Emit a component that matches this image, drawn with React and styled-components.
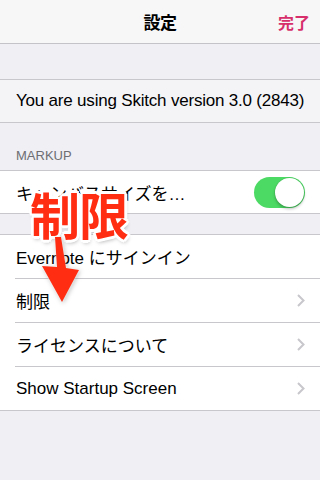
import React from 'react';
import styled, { createGlobalStyle } from 'styled-components';

const GlobalStyle = createGlobalStyle`
  html, body {
    margin: 0;
    padding: 0;
    background: #efeff4;
  }
  body {
    font-family: "Liberation Sans", "Noto Sans CJK JP", sans-serif;
    color: #000;
    -webkit-font-smoothing: antialiased;
  }
`;

const Screen = styled.div`
  position: relative;
  width: 320px;
  height: 480px;
  overflow: hidden;
  background: #efeff4;
`;

const NavBar = styled.div`
  height: 43px;
  display: grid;
  grid-template-columns: 1fr auto 1fr;
  align-items: center;
  background: #f7f7f8;
  border-bottom: 1px solid #c4c4c8;
`;

const NavTitle = styled.div`
  grid-column: 2;
  font-size: 17px;
  font-weight: 600;
  letter-spacing: -0.5px;
`;

const NavDone = styled.div`
  justify-self: end;
  padding-right: 10px;
  font-size: 16px;
  font-weight: 600;
  color: #d62f6b;
`;

const Group = styled.div`
  margin-top: ${p => p.gap}px;
  background: ${p => p.tint || '#fff'};
  border-top: 1px solid #c8c7cc;
  border-bottom: 1px solid #c8c7cc;
`;

const SectionHeader = styled.div`
  height: 47px;
  box-sizing: border-box;
  display: flex;
  align-items: flex-end;
  padding: 0 16px 7px;
  font-size: 13px;
  color: #6d6d72;
`;

const Row = styled.div`
  height: ${p => p.h || 43}px;
  display: flex;
  align-items: center;
  justify-content: space-between;
  padding: 0 15px 0 16px;
  font-size: 17px;
  white-space: nowrap;

  & + & {
    border-top: 1px solid #c8c7cc;
    margin-left: 15px;
    padding-left: 1px;
  }
`;

const Label = styled.span`
  letter-spacing: ${p => (p.tight ? '-0.2px' : '0')};
`;

const Switch = styled.div`
  width: 51px;
  height: 31px;
  border-radius: 16px;
  background: #4cd964;
  position: relative;
  flex-shrink: 0;
`;

const Knob = styled.div`
  position: absolute;
  top: 1px;
  right: 1px;
  width: 29px;
  height: 29px;
  border-radius: 50%;
  background: #fff;
  box-shadow: 0 2px 3px rgba(0, 0, 0, 0.25), 0 0 0 0.5px rgba(0, 0, 0, 0.1);
`;

const Chevron = () => (
  <svg width="8" height="13" viewBox="0 0 8 13">
    <path d="M1 1l5.5 5.5L1 12" fill="none" stroke="#c7c7cc" strokeWidth="2" />
  </svg>
);

const Callout = styled.div`
  position: absolute;
  left: 30px;
  top: 181px;
  font-family: "Noto Sans CJK JP", sans-serif;
  font-size: 50px;
  font-weight: 700;
  line-height: 64px;
  color: #ff2d12;
  letter-spacing: -1px;
  text-shadow:
    2px 0 0 #fff, -2px 0 0 #fff, 0 2px 0 #fff, 0 -2px 0 #fff,
    2px 2px 0 #fff, -2px -2px 0 #fff, 2px -2px 0 #fff, -2px 2px 0 #fff,
    3px 0 0 #fff, -3px 0 0 #fff, 0 3px 0 #fff, 0 -3px 0 #fff,
    1px 3px 4px rgba(0, 0, 0, 0.35);
`;

const ArrowSvg = styled.svg`
  position: absolute;
  left: 36px;
  top: 234px;
  filter: drop-shadow(0 0 1px rgba(255, 255, 255, 0.9)) drop-shadow(1px 1px 2px rgba(0, 0, 0, 0.25));
`;

const Arrow = () => (
  <ArrowSvg width="52" height="76" viewBox="0 0 52 76">
    <polygon
      points="19,3 25,3 30,34 43,36 26,68 6,32 21,33"
      fill="#ff2d12"
    />
  </ArrowSvg>
);

const App = () => {
  return (
    <Screen>
      <GlobalStyle />
      <NavBar>
        <NavTitle>設定</NavTitle>
        <NavDone>完了</NavDone>
      </NavBar>

      <Group gap={35} tint="#f4f4f7">
        <Row h={42}>
          <Label tight>You are using Skitch version 3.0 (2843)</Label>
        </Row>
      </Group>

      <SectionHeader>MARKUP</SectionHeader>
      <Group gap={0}>
        <Row h={42}>
          <Label>キャンバスサイズを…</Label>
          <Switch><Knob /></Switch>
        </Row>
      </Group>

      <Group gap={20}>
        <Row>
          <Label>Evernote にサインイン</Label>
        </Row>
        <Row>
          <Label>制限</Label>
          <Chevron />
        </Row>
        <Row>
          <Label>ライセンスについて</Label>
          <Chevron />
        </Row>
        <Row>
          <Label>Show Startup Screen</Label>
          <Chevron />
        </Row>
      </Group>

      <Callout>制限</Callout>
      <Arrow />
    </Screen>
  );
};

export default App;
